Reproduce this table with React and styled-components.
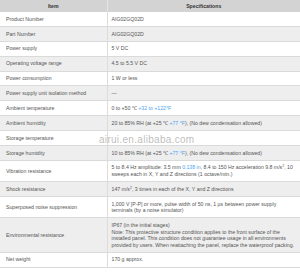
import React from "react";
import styled, { createGlobalStyle } from "styled-components";

const Global = createGlobalStyle`
  html, body { margin: 0; padding: 0; background: #fff; }
  body { width: 300px; height: 278px; overflow: hidden; }
`;

const Wrap = styled.div`
  position: relative;
  width: 300px;
  height: 278px;
  background: #fff;
  font-family: "Liberation Sans", Arial, sans-serif;
`;

const Table = styled.table`
  width: 300px;
  border-collapse: collapse;
  table-layout: fixed;
  font-size: 5.2px;
  line-height: 6.5px;
  color: #555;
`;

const HeadCell = styled.th`
  background: #d3d3d3;
  color: #333;
  font-weight: bold;
  height: 12px;
  padding: 0;
  text-align: center;
  border-right: 1px solid #e4e4e4;
  &:last-child { border-right: none; }
`;

const Row = styled.tr`
  background: ${(p) => (p.$alt ? "#eeeeee" : "#ffffff")};
  border-bottom: 1px solid #dadada;
`;

const Cell = styled.td`
  padding: 3.7px 5px 3.7px 6px;
  vertical-align: middle;
  border-right: 1px solid #dcdcdc;
  &:last-child { border-right: none; padding-left: 4px; }
`;

const Blue = styled.span`
  color: #4da3f0;
`;

const Sup = styled.sup`
  font-size: 3.6px;
  line-height: 0;
  vertical-align: 2px;
`;

const Watermark = styled.div`
  position: absolute;
  left: 99px;
  top: 134px;
  font-size: 10px;
  letter-spacing: 0.3px;
  color: rgba(120, 120, 120, 0.5);
  font-family: "Liberation Sans", Arial, sans-serif;
  pointer-events: none;
`;

const rows = [
  ["Product Number", "AIG02GQ02D"],
  ["Part Number", "AIG02GQ02D"],
  ["Power supply", "5 V DC"],
  ["Operating voltage range", "4.5 to 5.5 V DC"],
  ["Power consumption", "1 W or less"],
  ["Power supply unit isolation method", "—"],
  ["Ambient temperature", <>0 to +50 ℃ <Blue>+32 to +122°F</Blue></>],
  ["Ambient humidity", <>20 to 85% RH (at +25 ℃ <Blue>+77 °F</Blue>), (No dew condensation allowed)</>],
  ["Storage temperature", "\u00a0"],
  ["Storage humidity", <>10 to 85% RH (at +25 ℃ <Blue>+77 °F</Blue>), (No dew condensation allowed)</>],
  ["Vibration resistance", <>5 to 8.4 Hz amplitude: 3.5 mm <Blue>0.138 in</Blue>, 8.4 to 150 Hz acceleration 9.8 m/s<Sup>2</Sup>, 10<br />sweeps each in X, Y and Z directions (1 octave/min.)</>],
  ["Shock resistance", <>147 m/s<Sup>2</Sup>, 3 times in each of the X, Y and Z directions</>],
  ["Superposed noise suppression", "1,000 V [P-P] or more, pulse width of 50 ns, 1 µs between power supply terminals (by a noise simulator)"],
  ["Environmental resistance", <>IP67 (in the initial stages)<br />Note: This protective structure condition applies to the front surface of the installed panel. This condition does not guarantee usage in all environments provided by users. When reattaching the panel, replace the waterproof packing.</>],
  ["Net weight", "170 g approx."],
];

export default function App() {
  return (
    <Wrap>
      <Global />
      <Table>
        <colgroup>
          <col style={{ width: 107 }} />
          <col />
        </colgroup>
        <thead>
          <tr>
            <HeadCell>Item</HeadCell>
            <HeadCell>Specifications</HeadCell>
          </tr>
        </thead>
        <tbody>
          {rows.map(([k, v], i) => (
            <Row key={k} $alt={i % 2 === 1}>
              <Cell>{k}</Cell>
              <Cell>{v}</Cell>
            </Row>
          ))}
        </tbody>
      </Table>
      <Watermark>airui.en.alibaba.com</Watermark>
    </Wrap>
  );
}
